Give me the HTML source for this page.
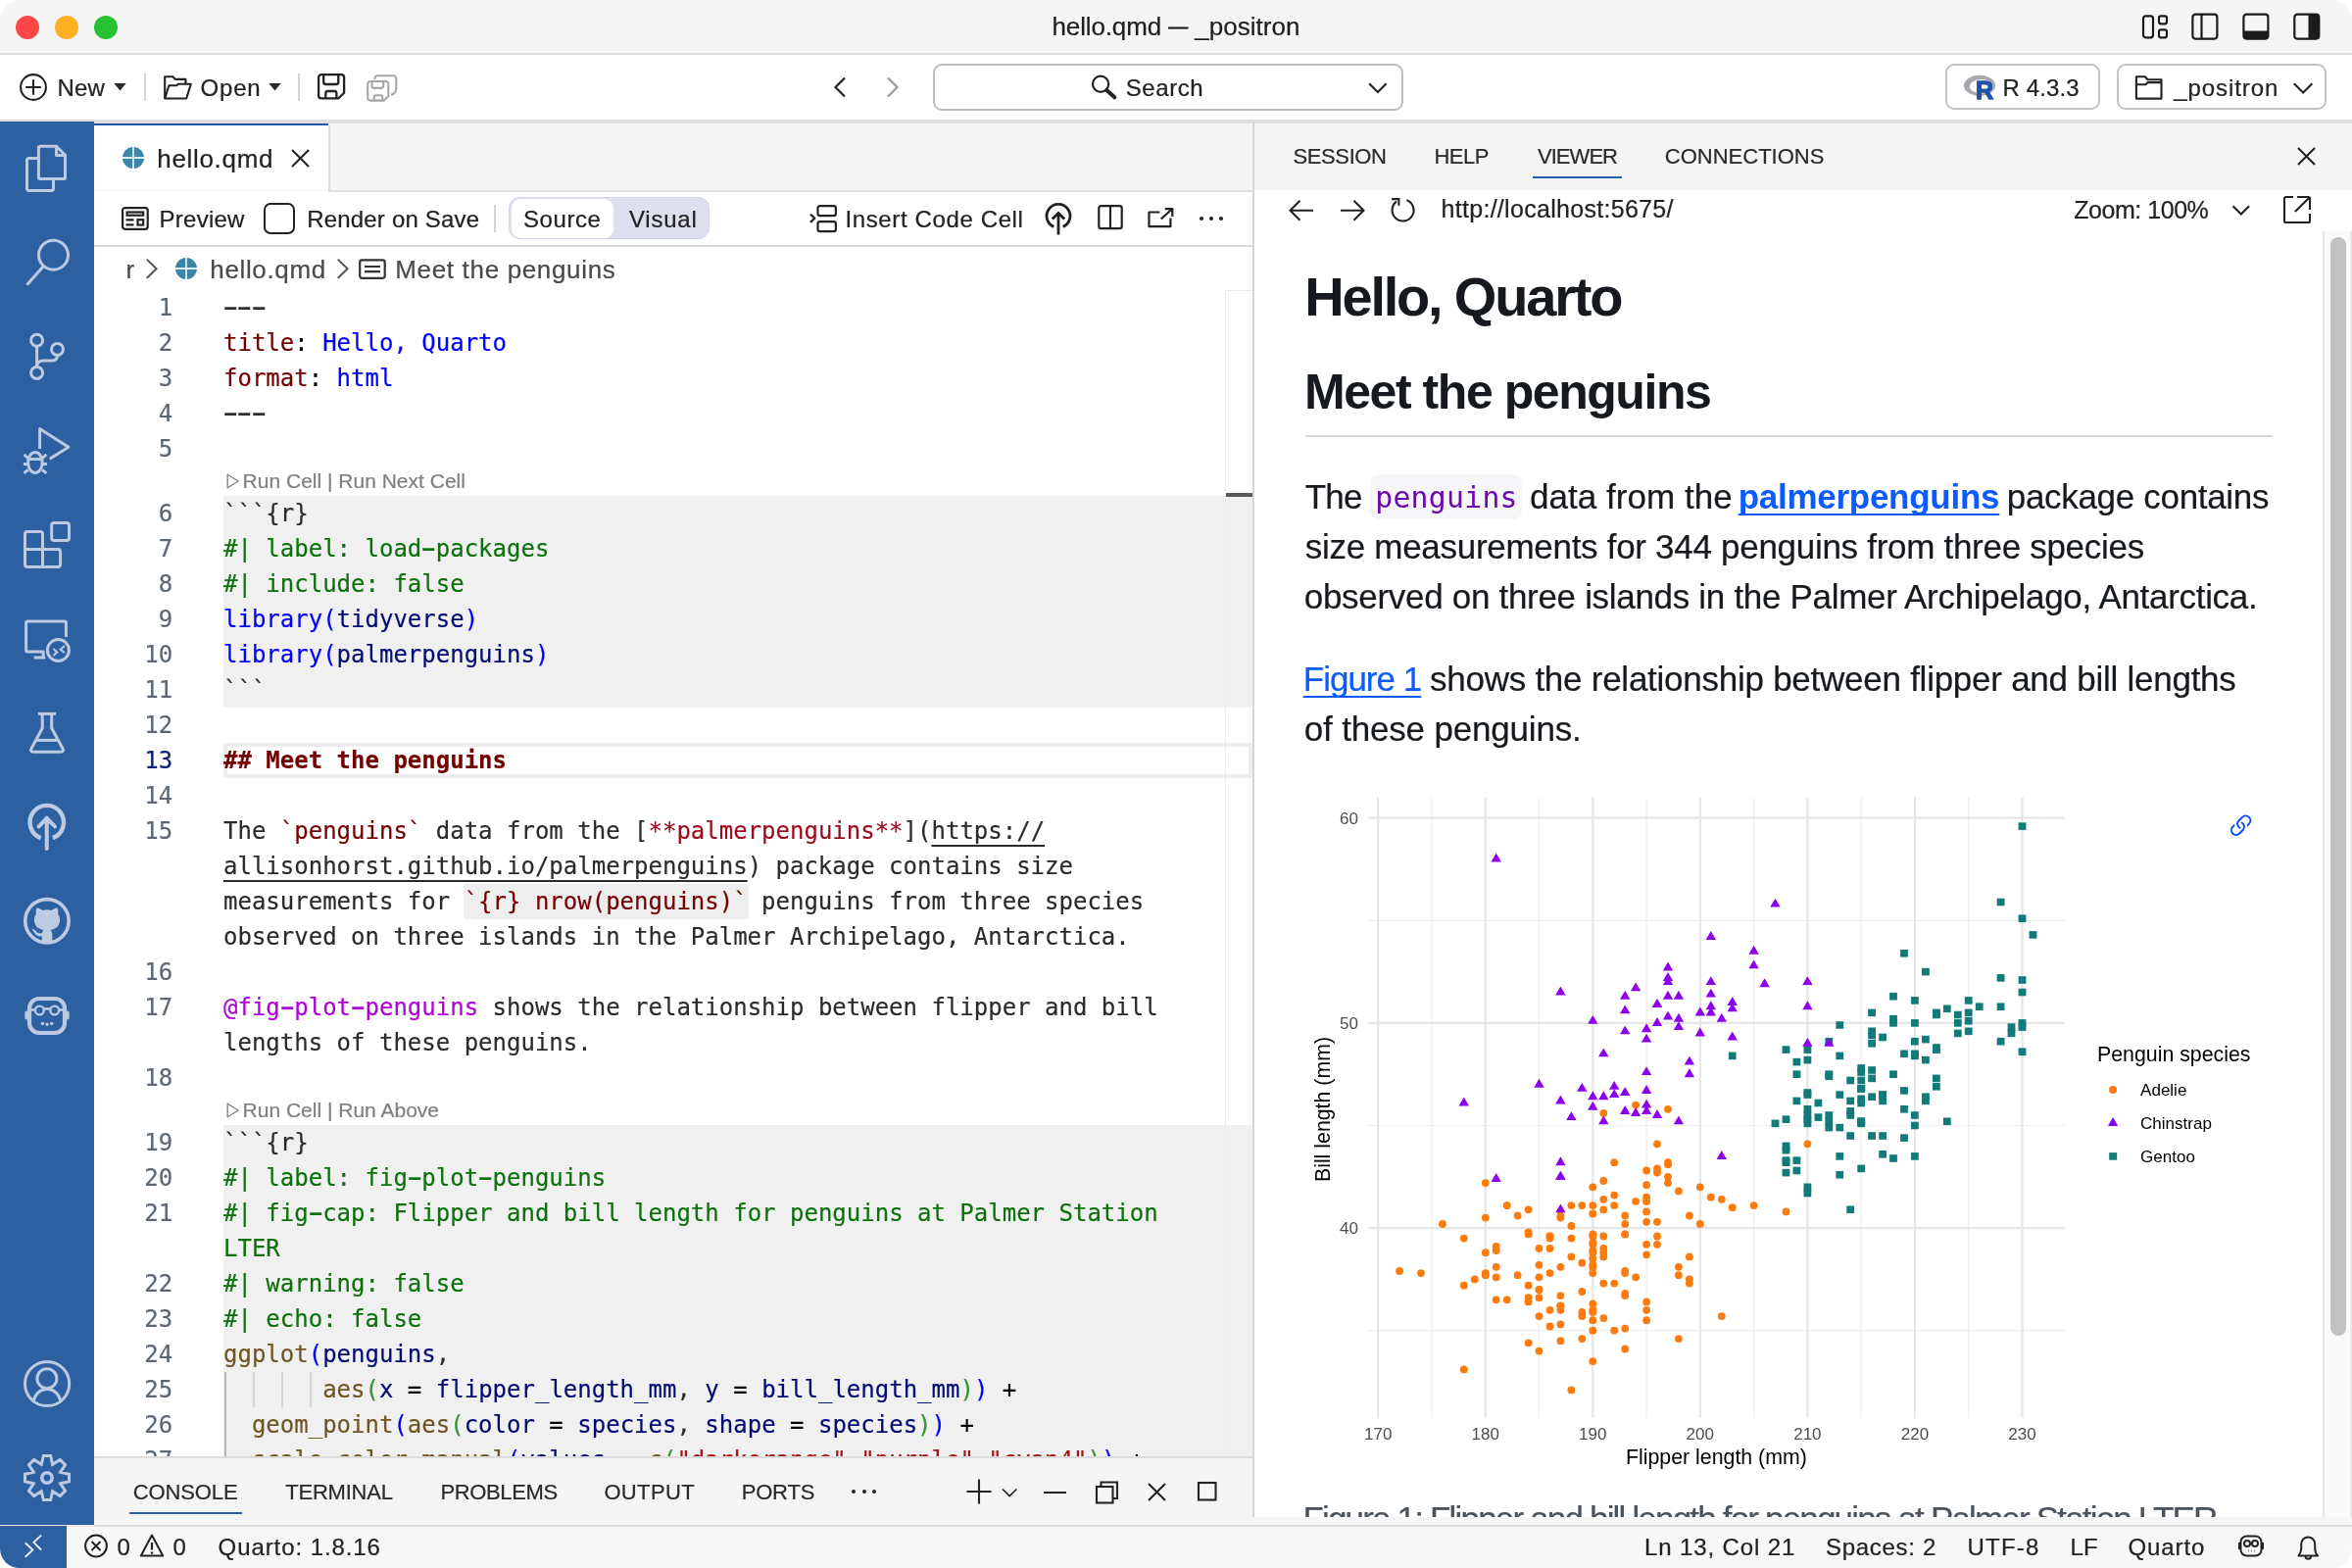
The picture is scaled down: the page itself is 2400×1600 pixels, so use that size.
<!DOCTYPE html>
<html lang="en"><head><meta charset="utf-8"><title>hello.qmd — _positron</title>
<style>
html,body{margin:0;padding:0;background:#fff;}
body{width:2400px;height:1600px;overflow:hidden;font-family:"Liberation Sans",Arial,sans-serif;}
#win{will-change:transform;position:absolute;left:0;top:0;width:2400px;height:1600px;overflow:hidden;border-radius:20px;background:#fff;}
.t{position:absolute;white-space:pre;line-height:1;margin:0;padding:0;}
.b{position:absolute;}
svg{position:absolute;overflow:visible;}
.hy{display:inline-block;transform:scale(1.900,1.300);transform-origin:50% 58%;}

</style></head>
<body>
<div id="win">
<div id="titlebar">
<div class="b" style="left:0px;top:0px;width:2400px;height:54px;background:#f5f5f5;"></div>
<div class="b" style="left:0px;top:54px;width:2400px;height:2px;background:#dcdcdc;"></div>
<div class="b" style="left:16px;top:16px;width:24px;height:24px;background:#fd4646;border-radius:50%;"></div>
<div class="b" style="left:56px;top:16px;width:24px;height:24px;background:#fdb024;border-radius:50%;"></div>
<div class="b" style="left:96px;top:16px;width:24px;height:24px;background:#28c131;border-radius:50%;"></div>
<span class="t" style="left:1073.500px;top:14.200px;font-size:26px;color:#1f1f1f;-webkit-text-stroke:0.220px;letter-spacing:-0.134px;">hello.qmd <span style="font-size:20px;position:relative;top:-2.300px;letter-spacing:0;-webkit-text-stroke:0.600px;">—</span> <span style="letter-spacing:0.024px;">_positron</span></span>
<svg style="left:2180px;top:8px;" width="200" height="40" viewBox="0 0 200 40" fill="none"><g stroke="#1a1a1a" stroke-width="2.2" fill="none"><rect x="7" y="8.3" width="10" height="22" rx="2.5"/><rect x="23" y="8.3" width="8" height="8" rx="2"/><rect x="23" y="22.3" width="8" height="8" rx="2"/><rect x="57.4" y="6.6" width="25" height="25" rx="3"/><line x1="66.5" y1="6.6" x2="66.5" y2="31.6"/><rect x="109.4" y="6.6" width="25" height="25" rx="3"/><rect x="161.3" y="6.6" width="25" height="25" rx="3"/></g><path d="M109.4 23.5h25v5.1a3 3 0 0 1-3 3h-19a3 3 0 0 1-3-3z" fill="#1a1a1a"/><path d="M175.5 6.6h7.8a3 3 0 0 1 3 3v19a3 3 0 0 1-3 3h-7.8z" fill="#1a1a1a"/></svg>
</div>
<div id="toolbar">
<div class="b" style="left:0px;top:56px;width:2400px;height:66px;background:#fff;"></div>
<div class="b" style="left:0px;top:122px;width:2400px;height:2px;background:#dedede;"></div>
<svg style="left:18px;top:73px;" width="32" height="32" viewBox="0 0 32 32" fill="none"><circle cx="16" cy="16" r="12.9" stroke="#222" stroke-width="2.1"/><path d="M8.2 16h15.6M16 8.2v15.6" stroke="#222" stroke-width="2.1"/></svg>
<span class="t" style='left:58.40px;top:77.80px;font-size:24px;color:#222;-webkit-text-stroke:0.220px;letter-spacing:0.208px;'>New</span>
<svg style="left:116px;top:84px;" width="14" height="10" viewBox="0 0 14 10" fill="none"><path d="M0.3 1h12.4L6.5 8.6z" fill="#2a2a2a"/></svg>
<div class="b" style="left:146.7px;top:75px;width:2px;height:28px;background:#d3d7dd;"></div>
<svg style="left:165px;top:75px;" width="34" height="28" viewBox="0 0 34 28" fill="none"><path d="M3.2 25.5V3.2h8.2l2.4 2.7h10.6v5.2" stroke="#222" stroke-width="2.1" stroke-linejoin="round" fill="none"/><path d="M3.2 25.5l4.2-13.2h7.6l2.2-1.6h12.6L25.2 25.5z" stroke="#222" stroke-width="2.1" stroke-linejoin="round" fill="none"/></svg>
<span class="t" style='left:204.60px;top:77.80px;font-size:24px;color:#222;-webkit-text-stroke:0.220px;letter-spacing:0.776px;'>Open</span>
<svg style="left:273.5px;top:84px;" width="14" height="10" viewBox="0 0 14 10" fill="none"><path d="M0.3 1h12.4L6.5 8.6z" fill="#2a2a2a"/></svg>
<div class="b" style="left:304.1px;top:75px;width:2px;height:28px;background:#d3d7dd;"></div>
<svg style="left:322px;top:73px;" width="32" height="32" viewBox="0 0 32 32" fill="none"><path d="M6 3.2h20.2a2.9 2.9 0 0 1 2.9 2.9v15.6l-5.6 5.6H6a2.9 2.9 0 0 1-2.9-2.9V6.100a2.9 2.9 0 0 1 2.900-2.900z" stroke="#222" stroke-width="2.3" stroke-linejoin="round"/><path d="M8.2 3.500v7.2a2.300 2.300 0 0 0 2.300 2.300h10.500a2.300 2.300 0 0 0 2.300-2.300V3.500" stroke="#222" stroke-width="2.3"/><path d="M10.300 27.200v-4.900a2.300 2.300 0 0 1 2.300-2.300h6.500a2.300 2.300 0 0 1 2.300 2.300v4.900" stroke="#222" stroke-width="2.300"/></svg>
<svg style="left:372px;top:74px;" width="36" height="32" viewBox="0 0 36 32" fill="none"><g stroke="#a6a6a6" stroke-width="2.1" fill="none" stroke-linejoin="round"><path d="M10.500 7.200V6a2.800 2.800 0 0 1 2.800-2.800h16.200a2.800 2.800 0 0 1 2.800 2.800v10.200c0 3.500-2.500 6-5.200 6.600"/><path d="M6 9h15.500a2.800 2.800 0 0 1 2.800 2.800v12.400l-4.400 4.400H6a2.800 2.800 0 0 1-2.800-2.800V11.800A2.800 2.800 0 0 1 6 9z"/><path d="M7.500 9.300v4.400a2.200 2.200 0 0 0 2.200 2.200h7.300a2.200 2.200 0 0 0 2.200-2.200V9.300"/><path d="M9.600 28.400v-3.100a2 2 0 0 1 2-2h4.700a2 2 0 0 1 2 2v3.100"/></g></svg>
<svg style="left:846px;top:75px;" width="24" height="28" viewBox="0 0 24 28" fill="none"><path d="M16 4.500L6.500 14l9.500 9.500" stroke="#222" stroke-width="2.2"/></svg>
<svg style="left:900px;top:75px;" width="24" height="28" viewBox="0 0 24 28" fill="none"><path d="M6 4.500L15.500 14 6 23.500" stroke="#9a9a9a" stroke-width="2.200"/></svg>
<div class="b" style="left:952px;top:65px;width:475.5px;height:43.5px;background:#fff;border:2px solid #bdbdbd;border-radius:9px;"></div>
<svg style="left:1110px;top:72px;" width="34" height="34" viewBox="0 0 34 34" fill="none"><circle cx="13.100" cy="13.700" r="8.100" stroke="#222" stroke-width="2.200"/><path d="M19.300 20l8 7.300" stroke="#222" stroke-width="4" stroke-linecap="round"/></svg>
<span class="t" style='left:1148.70px;top:77.80px;font-size:24px;color:#222;-webkit-text-stroke:0.220px;letter-spacing:0.580px;'>Search</span>
<svg style="left:1394px;top:80px;" width="24" height="20" viewBox="0 0 24 20" fill="none"><path d="M3.200 5.200l8.700 8.700 8.700-8.700" stroke="#222" stroke-width="2.100"/></svg>
<div class="b" style="left:1984.5px;top:65px;width:154px;height:43px;background:#fff;border:2px solid #c2c2c2;border-radius:9px;"></div>
<svg style="left:2003px;top:75px;" width="36" height="28" viewBox="0 0 36 28" fill="none"><ellipse cx="17" cy="12.300" rx="16.100" ry="10.500" fill="#a8a9ae"/><ellipse cx="18.900" cy="13.200" rx="11.900" ry="7.300" fill="#fff"/><text x="13" y="26.400" font-family="Liberation Sans, Arial, sans-serif" font-weight="700" font-size="25.300" fill="#2252a5" stroke="#2252a5" stroke-width="1.300" stroke-linejoin="round">R</text></svg>
<span class="t" style='left:2043.60px;top:77.70px;font-size:24px;color:#222;-webkit-text-stroke:0.220px;letter-spacing:0.110px;'>R 4.3.3</span>
<div class="b" style="left:2159.5px;top:65px;width:210px;height:43px;background:#fff;border:2px solid #c2c2c2;border-radius:9px;"></div>
<svg style="left:2176px;top:74px;" width="34" height="30" viewBox="0 0 34 30" fill="none"><path d="M3.900 26.600V4.200h8.900l2.700 3.100h14v19.300z" stroke="#222" stroke-width="2.100" stroke-linejoin="round"/><path d="M3.900 12.300h9.600l2.200-2.200h13.800" stroke="#222" stroke-width="2.100" stroke-linejoin="round"/></svg>
<span class="t" style='left:2218.30px;top:77.70px;font-size:24px;color:#222;-webkit-text-stroke:0.220px;letter-spacing:0.914px;'>_positron</span>
<svg style="left:2338px;top:80px;" width="24" height="20" viewBox="0 0 24 20" fill="none"><path d="M2.800 5.200l9.300 9.300 9.300-9.300" stroke="#222" stroke-width="2.100"/></svg>
</div>
<div id="activitybar">
<div class="b" style="left:0px;top:124px;width:96px;height:1432.5px;background:#2d60a1;"></div>
<svg style="left:0;top:0" width="96" height="1600" viewBox="0 0 96 1600" fill="none"><g stroke="#bccbe2" stroke-width="3" fill="none" stroke-linejoin="round" stroke-linecap="round"><path d="M41 149.300h16.500l9 9V181a1.600 1.600 0 0 1-1.600 1.600H41a1.600 1.600 0 0 1-1.600-1.600V150.900a1.600 1.600 0 0 1 1.600-1.600z"/><path d="M57.500 149.300v9.300h9"/><path d="M39.400 161.500H29.600a2.100 2.100 0 0 0-2.100 2.100v28.800a2.100 2.100 0 0 0 2.100 2.100h22.800a2.100 2.100 0 0 0 2.100-2.100v-9.800"/><circle cx="54.500" cy="260.200" r="15"/><path d="M44.300 271.800L27.500 290.700" stroke-linecap="butt"/><circle cx="37.600" cy="347.200" r="6"/><circle cx="58.500" cy="356.400" r="6"/><circle cx="37.600" cy="380.400" r="6"/><path d="M37.600 353.200v21.200"/><path d="M58.500 362.400c0 5.600-4 5.600-8 5.600h-6c-4 0-6.900 2-6.900 6"/><path d="M40.600 458V437.500l29.300 18.700-19.200 12" stroke-linecap="butt" stroke-linejoin="round"/><ellipse cx="35.900" cy="472" rx="7.300" ry="10.500"/><path d="M28.800 468.500h14.200" stroke-linecap="butt"/><path d="M23.900 473.400h4.500M43.400 473.400h4.500M24.500 463.900l4 3.400M47.300 463.900l-4 3.400M24.500 482.900l4.200-3.600M47.300 482.900l-4.200-3.600" stroke-linecap="butt"/><rect x="52.700" y="533.500" width="17.800" height="18" rx="2.500"/><path d="M43.500 560.400h15.600a2.500 2.500 0 0 1 2.500 2.500V576a2.500 2.500 0 0 1-2.500 2.500H28a2.500 2.500 0 0 1-2.500-2.500V545.100a2.500 2.500 0 0 1 2.500-2.500h13a2.500 2.500 0 0 1 2.500 2.500V578.500M25.500 560.400h18"/><path d="M67.400 650V635.400a1.500 1.500 0 0 0-1.500-1.500H28.100a1.500 1.500 0 0 0-1.500 1.500V663.500a1.500 1.500 0 0 0 1.500 1.500H44.100v5" stroke-linecap="butt"/><path d="M34.700 671h11.600" stroke-linecap="butt"/><circle cx="59.400" cy="663.500" r="11"/><path d="M54.500 662l3.700 3.500-3.700 3.600M65.800 658.900l-4 3.700 4 3.400" stroke-width="2.100" stroke-linecap="butt" stroke-linejoin="miter"/><path d="M38.900 728.400h18.200" stroke-linecap="butt"/><path d="M43.200 729.500V743L31.800 764.300a2 2 0 0 0 1.800 3h28.800a2 2 0 0 0 1.800-3L52.700 743V729.500"/><path d="M37.400 755.400h21.200" stroke-linecap="butt"/><path d="M41.600 855.100A17.200 17.200 0 1 1 53.900 855.100" stroke-width="4.400" stroke-linecap="butt"/><path d="M47.750 866V834.500M39.500 843.300l8.250-8.300 8.250 8.300" stroke-width="4"/><circle cx="47.950" cy="939.800" r="22.200" stroke-width="3.600"/><path stroke="none" fill="#bccbe2" d="M42.800 961.500v-6.300c-5.300 1.300-7-2.400-9.600-6.200-.5-.7-.3-1.300.6-1.100 3 .9 3.600 4.200 6.600 4.400 1 .1 1.900-.2 2.600-.6.200-1.200.7-2.100 1.400-2.800-5.200-.9-9.500-3.400-9.500-10.600 0-2.300.8-4.300 2.100-5.900-.4-1.300-.7-3.300.3-5.500.2-.4.600-.6 1-.5 1.900.3 3.800 1.400 5.200 2.500 3-.8 6-.8 9 0 1.400-1.100 3.300-2.200 5.200-2.500.4-.1.800.1 1 .5 1 2.200.7 4.200.3 5.500 1.300 1.600 2.100 3.600 2.100 5.900 0 7.200-4.300 9.700-9.500 10.600 1.100 1.100 1.700 2.800 1.700 4.900v7.700c-3.300 1.200-7.500 1.200-10.500 0z"/><rect x="30" y="1019" width="36" height="35" rx="10" stroke-width="4.200"/><path d="M27.300 1033.500v5M68.700 1033.500v5" stroke-width="4"/><circle cx="40.400" cy="1031" r="4.400" stroke-width="2.300"/><circle cx="55.700" cy="1031" r="4.400" stroke-width="2.300"/><path d="M44.800 1030c2-.9 4.500-.9 6.500 0M31 1030.500h5M60.100 1030.500h5" stroke-width="2.300"/><g fill="#bccbe2" stroke="none"><circle cx="43.500" cy="1044.500" r="1.700"/><circle cx="48.100" cy="1045.300" r="1.700"/><circle cx="52.700" cy="1044.500" r="1.700"/></g><circle cx="48.100" cy="1412" r="22.600"/><circle cx="47.900" cy="1406.700" r="10"/><path d="M34.200 1429.500c1.500-7.300 6.800-12 13.800-12s12.300 4.700 13.800 12"/><path d="M44.3 1485.5 L51.7 1485.5 L53.6 1494.3 L61.3 1489.5 L66.5 1494.7 L61.6 1502.3 L70.5 1504.3 L70.5 1511.7 L61.6 1513.7 L66.5 1521.3 L61.3 1526.5 L53.6 1521.7 L51.7 1530.5 L44.3 1530.5 L42.3 1521.7 L34.7 1526.5 L29.5 1521.3 L34.3 1513.7 L25.5 1511.7 L25.5 1504.3 L34.3 1502.3 L29.5 1494.7 L34.7 1489.5 L42.3 1494.3z" stroke-linejoin="miter"/><circle cx="47.970" cy="1508" r="5.200" stroke-width="3.500"/></g></svg>
</div>
<div id="statusbar">
<div class="b" style="left:1278px;top:1548px;width:1122px;height:8.5px;background:#f5f5f5;"></div>
<div class="b" style="left:0px;top:1556px;width:2400px;height:1.5px;background:#dddddd;"></div>
<div class="b" style="left:0px;top:1556px;width:96px;height:1.5px;background:#ece6e6;"></div>
<div class="b" style="left:0px;top:1557.5px;width:2400px;height:42.5px;background:#f7f7f7;"></div>
<div class="b" style="left:0px;top:1557px;width:68px;height:43px;background:#2d60a1;"></div>
<svg style="left:0px;top:1557px;" width="68" height="43" viewBox="0 0 68 43" fill="none"><path d="M25.700 17.300l7.700 7.200-7.700 7.300M42.100 9.600l-7.700 7.200 7.700 7.700" stroke="#e8eef7" stroke-width="1.900"/></svg>
<svg style="left:84px;top:1563.4px;" width="30" height="30" viewBox="0 0 30 30" fill="none"><circle cx="14" cy="14.500" r="10.900" stroke="#222" stroke-width="2"/><path d="M9.500 10l9 9M18.500 10l-9 9" stroke="#222" stroke-width="2"/></svg>
<span class="t" style='left:119.50px;top:1566.70px;font-size:24px;color:#222;-webkit-text-stroke:0.220px;'>0</span>
<svg style="left:141px;top:1563px;" width="30" height="30" viewBox="0 0 30 30" fill="none"><path d="M14 3.500L2.800 24.500h22.400z" stroke="#222" stroke-width="2" stroke-linejoin="round"/><path d="M14 11v7.500M14 20.500v2.300" stroke="#222" stroke-width="2.200"/></svg>
<span class="t" style='left:176.50px;top:1566.70px;font-size:24px;color:#222;-webkit-text-stroke:0.220px;'>0</span>
<span class="t" style='left:222.60px;top:1566.70px;font-size:24px;color:#222;-webkit-text-stroke:0.220px;letter-spacing:0.916px;'>Quarto: 1.8.16</span>
<span class="t" style='left:1678.00px;top:1566.70px;font-size:24px;color:#222;-webkit-text-stroke:0.220px;letter-spacing:0.881px;'>Ln 13, Col 21</span>
<span class="t" style='left:1863.00px;top:1566.70px;font-size:24px;color:#222;-webkit-text-stroke:0.220px;letter-spacing:0.702px;'>Spaces: 2</span>
<span class="t" style='left:2007.50px;top:1566.70px;font-size:24px;color:#222;-webkit-text-stroke:0.220px;letter-spacing:1.212px;'>UTF-8</span>
<span class="t" style='left:2112.50px;top:1566.70px;font-size:24px;color:#222;-webkit-text-stroke:0.220px;letter-spacing:0.145px;'>LF</span>
<span class="t" style='left:2171.50px;top:1566.70px;font-size:24px;color:#222;-webkit-text-stroke:0.220px;letter-spacing:0.895px;'>Quarto</span>
<svg style="left:2282px;top:1564px;" width="32" height="30" viewBox="0 0 32 30" fill="none"><g stroke="#222" stroke-width="2" fill="none"><rect x="4.500" y="3.500" width="21" height="20" rx="6"/><circle cx="11" cy="11" r="3"/><circle cx="19" cy="11" r="3"/><path d="M14 11h2M4.500 11H3v5h1.500M25.500 11H27v5h-1.500"/><path d="M12 18.500h.500M15 18.500h.500M18 18.500h.500" stroke-width="1.800"/></g></svg>
<svg style="left:2340px;top:1563px;" width="32" height="32" viewBox="0 0 32 32" fill="none"><path d="M5.500 24.500h19.500c-2.300-2.500-2.800-4-2.800-7.500v-4.500a7 7 0 0 0-14 0V17c0 3.500-.500 5-2.700 7.500z" stroke="#222" stroke-width="2" stroke-linejoin="round"/><path d="M12.500 25a2.800 2.800 0 0 0 5.600 0" stroke="#222" stroke-width="2"/></svg>
</div>
<div id="editor">
<div class="b" style="left:96px;top:124px;width:1182px;height:2px;background:#dedede;"></div>
<div class="b" style="left:96px;top:126px;width:1182px;height:68px;background:#f5f5f5;"></div>
<div class="b" style="left:96px;top:194px;width:1182px;height:2px;background:#dedede;"></div>
<div class="b" style="left:96px;top:126px;width:239px;height:70px;background:#fff;"></div>
<div class="b" style="left:96px;top:126px;width:239px;height:2px;background:#2259a5;"></div>
<div class="b" style="left:335px;top:128px;width:2px;height:68px;background:#dedede;"></div>
<div class="b" style="left:96px;top:194px;width:239px;height:1px;background:#f3f3f3;"></div>
<svg style="left:125.1px;top:150px;" width="22" height="22" viewBox="0 0 22 22" fill="none"><circle cx="11" cy="11" r="11" fill="#3b86a6"/><path d="M11 0v22M0 11h22" stroke="#dfeef4" stroke-width="1.800"/></svg>
<span class="t" style='left:160.30px;top:148.70px;font-size:26px;color:#222;-webkit-text-stroke:0.220px;letter-spacing:0.678px;'>hello.qmd</span>
<svg style="left:296px;top:150.5px;" width="21" height="21" viewBox="0 0 21 21" fill="none"><path d="M2 2l17 17M19 2L2 19" stroke="#222" stroke-width="2.100"/></svg>
<div class="b" style="left:96px;top:196px;width:1182px;height:54px;background:#fff;"></div>
<div class="b" style="left:96px;top:250px;width:1182px;height:2px;background:#dcdcdc;"></div>
<svg style="left:122px;top:209px;" width="32" height="28" viewBox="0 0 32 28" fill="none"><g stroke="#222" stroke-width="2.200" fill="none"><rect x="3.100" y="3.100" width="25.600" height="21.700" rx="2.500"/><rect x="7.600" y="7.500" width="16.600" height="3.200"/><rect x="18.500" y="15.200" width="5.700" height="5.300"/><path d="M6.500 15.400h8M6.500 20.300h8"/></g></svg>
<span class="t" style='left:162.60px;top:211.50px;font-size:24px;color:#222;-webkit-text-stroke:0.220px;letter-spacing:0.245px;'>Preview</span>
<div class="b" style="left:269px;top:207px;width:28px;height:28px;background:#fff;border:2px solid #222;border-radius:7px;"></div>
<span class="t" style='left:313.20px;top:211.50px;font-size:24px;color:#222;-webkit-text-stroke:0.220px;letter-spacing:0.192px;'>Render on Save</span>
<div class="b" style="left:503.5px;top:209px;width:2px;height:28px;background:#d3d7dd;"></div>
<div class="b" style="left:519px;top:201px;width:203px;height:41px;background:#dddfee;border:1.500px solid #d3d5ea;border-radius:11px;"></div>
<div class="b" style="left:521.7px;top:203px;width:104.2px;height:40px;background:#fff;border-radius:9.500px;"></div>
<span class="t" style='left:534.00px;top:211.50px;font-size:24px;color:#222;-webkit-text-stroke:0.220px;letter-spacing:0.560px;'>Source</span>
<span class="t" style='left:642.00px;top:211.50px;font-size:24px;color:#222;-webkit-text-stroke:0.220px;letter-spacing:0.779px;'>Visual</span>
<svg style="left:823.5px;top:207px;" width="34" height="32" viewBox="0 0 34 32" fill="none"><g stroke="#222" stroke-width="2.200" fill="none"><rect x="10.500" y="3.200" width="18.400" height="10" rx="2.200"/><rect x="10.500" y="19.200" width="18.400" height="10" rx="2.200"/><path d="M3 11.500l4.200 4.200L3 19.900"/></g></svg>
<span class="t" style='left:862.40px;top:211.50px;font-size:24px;color:#222;-webkit-text-stroke:0.220px;letter-spacing:0.630px;'>Insert Code Cell</span>
<svg style="left:1064px;top:204px;" width="32" height="36" viewBox="0 0 32 36" fill="none"><g stroke="#222" stroke-width="2.800" fill="none"><path d="M11.300 27.400A12 12 0 1 1 20.700 27.400"/><path d="M16 35.500V14"/><path d="M9.800 19.600L16 13.400l6.200 6.200"/></g></svg>
<svg style="left:1118px;top:207px;" width="30" height="30" viewBox="0 0 30 30" fill="none"><g stroke="#222" stroke-width="2.200" fill="none"><rect x="3.300" y="3.200" width="23.400" height="23" rx="2.200"/><path d="M15 3.200v23"/></g></svg>
<svg style="left:1169px;top:208px;" width="30" height="28" viewBox="0 0 30 28" fill="none"><g stroke="#222" stroke-width="2.200" fill="none" stroke-linejoin="round"><path d="M14.400 8.500H3.500V23.200H25.400V14.500"/><path d="M15.700 15.500L27 5.200M19.800 5.100h7.500v7.900"/></g></svg>
<div class="b" style="left:1223.8px;top:220.9px;width:3.8px;height:3.8px;background:#222;border-radius:50%;"></div>
<div class="b" style="left:1234.1px;top:220.9px;width:3.8px;height:3.8px;background:#222;border-radius:50%;"></div>
<div class="b" style="left:1244.3999999999999px;top:220.9px;width:3.8px;height:3.8px;background:#222;border-radius:50%;"></div>
<div class="b" style="left:96px;top:252px;width:1182px;height:43px;background:#fff;"></div>
<span class="t" style='left:128.40px;top:261.60px;font-size:26px;color:#4a4a4a;-webkit-text-stroke:0.220px;'>r</span>
<svg style="left:146px;top:262px;" width="18" height="24" viewBox="0 0 18 24" fill="none"><path d="M3.800 2.600l9.800 9.600-9.800 9.600" stroke="#555" stroke-width="2"/></svg>
<svg style="left:179px;top:263px;" width="22" height="22" viewBox="0 0 22 22" fill="none"><circle cx="11" cy="11" r="11" fill="#3b86a6"/><path d="M11 0v22M0 11h22" stroke="#dfeef4" stroke-width="1.800"/></svg>
<span class="t" style='left:214.30px;top:261.60px;font-size:26px;color:#4a4a4a;-webkit-text-stroke:0.220px;letter-spacing:0.641px;'>hello.qmd</span>
<svg style="left:341px;top:262px;" width="18" height="24" viewBox="0 0 18 24" fill="none"><path d="M3.800 2.600l9.800 9.600-9.800 9.600" stroke="#555" stroke-width="2"/></svg>
<svg style="left:364px;top:263px;" width="32" height="24" viewBox="0 0 32 24" fill="none"><g stroke="#333" stroke-width="2.200" fill="none"><rect x="3.200" y="2.300" width="25.500" height="18.500" rx="2.200"/><path d="M8 9h16M8 14.200h16"/></g></svg>
<span class="t" style='left:403.30px;top:261.60px;font-size:26px;color:#4a4a4a;-webkit-text-stroke:0.220px;letter-spacing:0.660px;'>Meet the penguins</span>
<div class="b" style="left:96px;top:295px;width:1182px;height:1191px;background:#fff;overflow:hidden;"></div>
<div class="b" style="left:228px;top:505.59999999999997px;width:1050px;height:216.00000000000006px;background:#f0f0f0;"></div>
<div class="b" style="left:228px;top:1147.9px;width:1050px;height:338.0999999999999px;background:#f0f0f0;"></div>
<div class="b" style="left:228px;top:757.9px;width:1042px;height:28px;background:transparent;border:4px solid #ededed;"></div>
<div class="b" style="left:472.65px;top:901.6px;width:291.0px;height:36px;background:#eeeeee;"></div>
<div class="b" style="left:1250px;top:296px;width:1px;height:1190px;background:#ebebeb;"></div>
<div class="b" style="left:1250px;top:296px;width:28px;height:1px;background:#ebebeb;"></div>
<div class="b" style="left:1251px;top:503px;width:27px;height:4px;background:#5a5a5a;"></div>
<div class="b" style="left:229px;top:1399.9px;width:1.5px;height:108px;background:#b8b8b8;"></div>
<div class="b" style="left:258px;top:1399.9px;width:1.5px;height:36px;background:#d6d6d6;"></div>
<div class="b" style="left:287px;top:1399.9px;width:1.5px;height:36px;background:#d6d6d6;"></div>
<div class="b" style="left:316px;top:1399.9px;width:1.5px;height:36px;background:#d6d6d6;"></div>
<div id='code' style='position:absolute;left:0;top:0;font-family:"DejaVu Sans Mono", "Liberation Mono", monospace;font-size:24px;-webkit-text-stroke:0.180px;'>
<span class="t" style="left:161.75px;top:301.60px;color:#5c6773;">1</span>
<span class="t" style="left:228px;top:301.60px;"><span style="color:#2a2a2a;"><span class="hy">-</span><span class="hy">-</span><span class="hy">-</span></span></span>
<span class="t" style="left:161.75px;top:337.60px;color:#5c6773;">2</span>
<span class="t" style="left:228px;top:337.60px;"><span style="color:#740000;">title</span><span style="color:#000;">: </span><span style="color:#0000ff;">Hello, Quarto</span></span>
<span class="t" style="left:161.75px;top:373.60px;color:#5c6773;">3</span>
<span class="t" style="left:228px;top:373.60px;"><span style="color:#740000;">format</span><span style="color:#000;">: </span><span style="color:#0000ff;">html</span></span>
<span class="t" style="left:161.75px;top:409.60px;color:#5c6773;">4</span>
<span class="t" style="left:228px;top:409.60px;"><span style="color:#2a2a2a;"><span class="hy">-</span><span class="hy">-</span><span class="hy">-</span></span></span>
<span class="t" style="left:161.75px;top:445.60px;color:#5c6773;">5</span>
<span class="t" style="left:161.75px;top:511.90px;color:#5c6773;">6</span>
<span class="t" style="left:228px;top:511.90px;"><span style="color:#2a2a2a;">```{r}</span></span>
<span class="t" style="left:161.75px;top:547.90px;color:#5c6773;">7</span>
<span class="t" style="left:228px;top:547.90px;"><span style="color:#0b720b;">#| label: load<span class="hy">-</span>packages</span></span>
<span class="t" style="left:161.75px;top:583.90px;color:#5c6773;">8</span>
<span class="t" style="left:228px;top:583.90px;"><span style="color:#0b720b;">#| include: false</span></span>
<span class="t" style="left:161.75px;top:619.90px;color:#5c6773;">9</span>
<span class="t" style="left:228px;top:619.90px;"><span style="color:#0000ff;">library(</span><span style="color:#000c74;">tidyverse</span><span style="color:#0000ff;">)</span></span>
<span class="t" style="left:147.30px;top:655.90px;color:#5c6773;">10</span>
<span class="t" style="left:228px;top:655.90px;"><span style="color:#0000ff;">library(</span><span style="color:#000c74;">palmerpenguins</span><span style="color:#0000ff;">)</span></span>
<span class="t" style="left:147.30px;top:691.90px;color:#5c6773;">11</span>
<span class="t" style="left:228px;top:691.90px;"><span style="color:#2a2a2a;">```</span></span>
<span class="t" style="left:147.30px;top:727.90px;color:#5c6773;">12</span>
<span class="t" style="left:147.30px;top:763.90px;color:#0b216f;">13</span>
<span class="t" style="left:228px;top:763.90px;"><span style="color:#740000;font-weight:700;">## Meet the penguins</span></span>
<span class="t" style="left:147.30px;top:799.90px;color:#5c6773;">14</span>
<span class="t" style="left:147.30px;top:835.90px;color:#5c6773;">15</span>
<span class="t" style="left:228px;top:835.90px;"><span style="color:#2a2a2a;">The </span><span style="color:#740000;">`penguins`</span><span style="color:#2a2a2a;"> data from the [</span><span style="color:#9c0b1c;">**palmerpenguins**</span><span style="color:#2a2a2a;">](</span><span style="color:#2a2a2a;text-decoration:underline;text-decoration-thickness:1.800px;text-underline-offset:6px;text-decoration-skip-ink:none;">https://</span></span>
<span class="t" style="left:228px;top:871.90px;"><span style="color:#2a2a2a;text-decoration:underline;text-decoration-thickness:1.800px;text-underline-offset:6px;text-decoration-skip-ink:none;">allisonhorst.github.io/palmerpenguins</span><span style="color:#2a2a2a;">) package contains size</span></span>
<span class="t" style="left:228px;top:907.90px;"><span style="color:#2a2a2a;">measurements for </span><span style="color:#740000;">`{r} nrow(penguins)`</span><span style="color:#2a2a2a;"> penguins from three species</span></span>
<span class="t" style="left:228px;top:943.90px;"><span style="color:#2a2a2a;">observed on three islands in the Palmer Archipelago, Antarctica.</span></span>
<span class="t" style="left:147.30px;top:979.90px;color:#5c6773;">16</span>
<span class="t" style="left:147.30px;top:1015.90px;color:#5c6773;">17</span>
<span class="t" style="left:228px;top:1015.90px;"><span style="color:#af00db;">@fig<span class="hy">-</span>plot<span class="hy">-</span>penguins</span><span style="color:#2a2a2a;"> shows the relationship between flipper and bill</span></span>
<span class="t" style="left:228px;top:1051.90px;"><span style="color:#2a2a2a;">lengths of these penguins.</span></span>
<span class="t" style="left:147.30px;top:1087.90px;color:#5c6773;">18</span>
<span class="t" style="left:147.30px;top:1154.20px;color:#5c6773;">19</span>
<span class="t" style="left:228px;top:1154.20px;"><span style="color:#2a2a2a;">```{r}</span></span>
<span class="t" style="left:147.30px;top:1190.20px;color:#5c6773;">20</span>
<span class="t" style="left:228px;top:1190.20px;"><span style="color:#0b720b;">#| label: fig<span class="hy">-</span>plot<span class="hy">-</span>penguins</span></span>
<span class="t" style="left:147.30px;top:1226.20px;color:#5c6773;">21</span>
<span class="t" style="left:228px;top:1226.20px;"><span style="color:#0b720b;">#| fig<span class="hy">-</span>cap: Flipper and bill length for penguins at Palmer Station</span></span>
<span class="t" style="left:228px;top:1262.20px;"><span style="color:#0b720b;">LTER</span></span>
<span class="t" style="left:147.30px;top:1298.20px;color:#5c6773;">22</span>
<span class="t" style="left:228px;top:1298.20px;"><span style="color:#0b720b;">#| warning: false</span></span>
<span class="t" style="left:147.30px;top:1334.20px;color:#5c6773;">23</span>
<span class="t" style="left:228px;top:1334.20px;"><span style="color:#0b720b;">#| echo: false</span></span>
<span class="t" style="left:147.30px;top:1370.20px;color:#5c6773;">24</span>
<span class="t" style="left:228px;top:1370.20px;"><span style="color:#6f5523;">ggplot</span><span style="color:#0000ff;">(</span><span style="color:#000c74;">penguins</span><span style="color:#2a2a2a;">,</span></span>
<span class="t" style="left:147.30px;top:1406.20px;color:#5c6773;">25</span>
<span class="t" style="left:228px;top:1406.20px;"><span style="color:#2a2a2a;">       </span><span style="color:#6f5523;">aes</span><span style="color:#319331;">(</span><span style="color:#000c74;">x</span><span style="color:#000;"> = </span><span style="color:#000c74;">flipper_length_mm</span><span style="color:#2a2a2a;">, </span><span style="color:#000c74;">y</span><span style="color:#000;"> = </span><span style="color:#000c74;">bill_length_mm</span><span style="color:#319331;">)</span><span style="color:#0000ff;">)</span><span style="color:#000;"> +</span></span>
<span class="t" style="left:147.30px;top:1442.20px;color:#5c6773;">26</span>
<span class="t" style="left:228px;top:1442.20px;"><span style="color:#2a2a2a;">  </span><span style="color:#6f5523;">geom_point</span><span style="color:#0000ff;">(</span><span style="color:#6f5523;">aes</span><span style="color:#319331;">(</span><span style="color:#000c74;">color</span><span style="color:#000;"> = </span><span style="color:#000c74;">species</span><span style="color:#2a2a2a;">, </span><span style="color:#000c74;">shape</span><span style="color:#000;"> = </span><span style="color:#000c74;">species</span><span style="color:#319331;">)</span><span style="color:#0000ff;">)</span><span style="color:#000;"> +</span></span>
<span class="t" style="left:147.30px;top:1478.20px;color:#5c6773;">27</span>
<span class="t" style="left:228px;top:1478.20px;"><span style="color:#2a2a2a;">  </span><span style="color:#6f5523;">scale_color_manual</span><span style="color:#0000ff;">(</span><span style="color:#000c74;">values</span><span style="color:#000;"> = </span><span style="color:#6f5523;">c</span><span style="color:#319331;">(</span><span style="color:#a31515;">&quot;darkorange&quot;</span><span style="color:#2a2a2a;">,</span><span style="color:#a31515;">&quot;purple&quot;</span><span style="color:#2a2a2a;">,</span><span style="color:#a31515;">&quot;cyan4&quot;</span><span style="color:#319331;">)</span><span style="color:#0000ff;">)</span><span style="color:#000;"> +</span></span>
</div>
<svg style="left:230px;top:481.6px;" width="16" height="18" viewBox="0 0 16 18" fill="none"><path d="M2.200 2.300v13.400l11-6.700z" stroke="#808080" stroke-width="1.300" stroke-linejoin="round"/></svg>
<span class="t" style='left:247.60px;top:480.10px;font-size:21px;color:#808080;-webkit-text-stroke:0.220px;letter-spacing:0.006px;'>Run Cell | Run Next Cell</span>
<svg style="left:230px;top:1123.9px;" width="16" height="18" viewBox="0 0 16 18" fill="none"><path d="M2.200 2.300v13.400l11-6.700z" stroke="#808080" stroke-width="1.300" stroke-linejoin="round"/></svg>
<span class="t" style='left:247.60px;top:1122.40px;font-size:21px;color:#808080;-webkit-text-stroke:0.220px;'>Run Cell | Run Above</span>
<div class="b" style="left:96px;top:1486px;width:1182px;height:1.5px;background:#dcdcdc;"></div>
<div class="b" style="left:96px;top:1487.5px;width:1182px;height:68.5px;background:#f5f5f5;"></div>
<span class="t" style='left:135.80px;top:1511.80px;font-size:22px;color:#2a2a2a;-webkit-text-stroke:0.220px;letter-spacing:-0.137px;'>CONSOLE</span>
<span class="t" style='left:291.20px;top:1511.80px;font-size:22px;color:#2a2a2a;-webkit-text-stroke:0.220px;letter-spacing:-0.202px;'>TERMINAL</span>
<span class="t" style='left:449.60px;top:1511.80px;font-size:22px;color:#2a2a2a;-webkit-text-stroke:0.220px;letter-spacing:-0.399px;'>PROBLEMS</span>
<span class="t" style='left:616.40px;top:1511.80px;font-size:22px;color:#2a2a2a;-webkit-text-stroke:0.220px;letter-spacing:0.357px;'>OUTPUT</span>
<span class="t" style='left:756.70px;top:1511.80px;font-size:22px;color:#2a2a2a;-webkit-text-stroke:0.220px;letter-spacing:-0.179px;'>PORTS</span>
<div class="b" style="left:132.2px;top:1543px;width:114.8px;height:2px;background:#2a5fa5;"></div>
<div class="b" style="left:869.3px;top:1519.9px;width:4.2px;height:4.2px;background:#222;border-radius:50%;"></div>
<div class="b" style="left:879.5px;top:1519.9px;width:4.2px;height:4.2px;background:#222;border-radius:50%;"></div>
<div class="b" style="left:889.6999999999999px;top:1519.9px;width:4.2px;height:4.2px;background:#222;border-radius:50%;"></div>
<svg style="left:984px;top:1507px;" width="30" height="30" viewBox="0 0 30 30" fill="none"><path d="M15 2.500v25M2.500 15h25" stroke="#222" stroke-width="2.100"/></svg>
<svg style="left:1020px;top:1515px;" width="20" height="16" viewBox="0 0 20 16" fill="none"><path d="M3 4.500l7.200 7 7.200-7" stroke="#222" stroke-width="1.700"/></svg>
<div class="b" style="left:1065px;top:1521.8px;width:23px;height:2.1px;background:#222;"></div>
<svg style="left:1116px;top:1509px;" width="28" height="28" viewBox="0 0 28 28" fill="none"><g stroke="#222" stroke-width="2.100" fill="none"><rect x="3" y="8" width="16.500" height="16.500"/><path d="M7.500 8V3.500h16.500V20h-4.500"/></g></svg>
<svg style="left:1170px;top:1512px;" width="21" height="21" viewBox="0 0 21 21" fill="none"><path d="M2 2l17 17M19 2L2 19" stroke="#222" stroke-width="2.100"/></svg>
<svg style="left:1220px;top:1510px;" width="24" height="24" viewBox="0 0 24 24" fill="none"><rect x="3" y="3" width="17.500" height="17.500" stroke="#222" stroke-width="2.100"/></svg>
</div>
<div id="viewer">
<div class="b" style="left:1278px;top:124px;width:2px;height:1424px;background:#d6d6d6;"></div>
<div class="b" style="left:1280px;top:124px;width:1120px;height:2px;background:#dedede;"></div>
<div class="b" style="left:1280px;top:126px;width:1120px;height:68px;background:#f5f5f5;"></div>
<span class="t" style='left:1319.50px;top:149.20px;font-size:22px;color:#2a2a2a;-webkit-text-stroke:0.220px;letter-spacing:-0.387px;'>SESSION</span>
<span class="t" style='left:1463.40px;top:149.20px;font-size:22px;color:#2a2a2a;-webkit-text-stroke:0.220px;letter-spacing:-0.504px;'>HELP</span>
<span class="t" style='left:1569.00px;top:149.20px;font-size:22px;color:#2a2a2a;-webkit-text-stroke:0.220px;letter-spacing:-0.962px;'>VIEWER</span>
<span class="t" style='left:1698.80px;top:149.20px;font-size:22px;color:#2a2a2a;-webkit-text-stroke:0.220px;'>CONNECTIONS</span>
<div class="b" style="left:1564.1px;top:180px;width:90.6px;height:2px;background:#2a5fa5;"></div>
<svg style="left:2343px;top:148.5px;" width="21" height="21" viewBox="0 0 21 21" fill="none"><path d="M2 2l17 17M19 2L2 19" stroke="#222" stroke-width="2.100"/></svg>
<div class="b" style="left:1280px;top:194px;width:1120px;height:1354px;background:#fff;"></div>
<svg style="left:1312px;top:200px;" width="32" height="30" viewBox="0 0 32 30" fill="none"><path d="M28 14.800H4.500M14.500 4.800l-10 10 10 10" stroke="#222" stroke-width="2.100"/></svg>
<svg style="left:1364px;top:200px;" width="32" height="30" viewBox="0 0 32 30" fill="none"><path d="M4 14.800h23.500M17.500 4.800l10 10-10 10" stroke="#222" stroke-width="2.100"/></svg>
<svg style="left:1416px;top:198px;" width="32" height="32" viewBox="0 0 32 32" fill="none"><path d="M19.400 6.200A11 11 0 1 1 9 7.700" stroke="#222" stroke-width="2.100"/><path d="M4.100 5.100h7.300v6.600" stroke="#222" stroke-width="2.100"/></svg>
<span class="t" style='left:1470.50px;top:201.00px;font-size:25px;color:#222;-webkit-text-stroke:0.220px;letter-spacing:0.297px;'>http://localhost:5675/</span>
<span class="t" style='left:2116.30px;top:201.50px;font-size:25px;color:#222;-webkit-text-stroke:0.220px;letter-spacing:-0.469px;'>Zoom: 100%</span>
<svg style="left:2276px;top:205px;" width="22" height="20" viewBox="0 0 22 20" fill="none"><path d="M2.500 5.200l8.300 8.300 8.300-8.300" stroke="#222" stroke-width="2.100"/></svg>
<svg style="left:2327px;top:197px;" width="34" height="34" viewBox="0 0 34 34" fill="none"><g stroke="#222" stroke-width="2.100" fill="none"><path d="M13 4H5.500a1.500 1.500 0 0 0-1.500 1.500V28.500a1.500 1.500 0 0 0 1.500 1.500H28.500a1.500 1.500 0 0 0 1.500-1.500V21"/><path d="M17.100 4H28.500a1.500 1.500 0 0 1 1.500 1.500V16.900"/><path d="M14.900 19.100L29.300 4.700"/></g></svg>
<div class="b" style="left:2370px;top:236px;width:26px;height:1312px;background:#fafafa;border-left:2px solid #e2e2e2;border-right:2px solid #e8e8e8;"></div>
<div class="b" style="left:2378px;top:242px;width:16px;height:1121px;background:#c1c1c1;border-radius:8px;"></div>
<h1 class="t" style='left:1331.20px;top:274.50px;font-size:56px;color:#16191d;font-weight:700;letter-spacing:-2.199px;'>Hello, Quarto</h1>
<h2 class="t" style='left:1331.00px;top:374.70px;font-size:50px;color:#16191d;font-weight:700;letter-spacing:-1.445px;'>Meet the penguins</h2>
<div class="b" style="left:1332px;top:444px;width:987px;height:2px;background:#d9dadc;"></div>
<div class="b" style="left:1398.2px;top:484.3px;width:154.4px;height:46px;background:#f6f6f8;border-radius:9px;"></div>
<p style="margin:0"><span class="t" style='left:1331.80px;top:488.50px;font-size:35px;color:#16191d;-webkit-text-stroke:0.220px;letter-spacing:-0.874px;'>The</span> <code class="t" style='left:1403.20px;top:493.00px;font-size:29.75px;color:#6b0aa8;font-family:"DejaVu Sans Mono", "Liberation Mono", monospace;letter-spacing:0.288px;'>penguins</code> <span class="t" style='left:1560.90px;top:488.50px;font-size:35px;color:#16191d;-webkit-text-stroke:0.220px;letter-spacing:0.053px;'>data from the</span> <a class="t" style='left:1773.70px;top:488.50px;font-size:35px;color:#0d5bfd;font-weight:700;letter-spacing:-0.274px;text-decoration:underline;text-decoration-thickness:2.200px;text-underline-offset:5px;text-decoration-skip-ink:none;'>palmerpenguins</a> <span class="t" style='left:2047.80px;top:488.50px;font-size:35px;color:#16191d;-webkit-text-stroke:0.220px;letter-spacing:-0.315px;'>package contains</span> <span class="t" style='left:1331.80px;top:539.50px;font-size:35px;color:#16191d;-webkit-text-stroke:0.220px;letter-spacing:-0.292px;'>size measurements for 344 penguins from three species</span> <span class="t" style='left:1330.80px;top:590.50px;font-size:35px;color:#16191d;-webkit-text-stroke:0.220px;letter-spacing:-0.307px;'>observed on three islands in the Palmer Archipelago, Antarctica.</span></p>
<p style="margin:0"><a class="t" style='left:1329.80px;top:674.60px;font-size:35px;color:#0d5bfd;-webkit-text-stroke:0.220px;letter-spacing:-1.006px;text-decoration:underline;text-decoration-thickness:2.200px;text-underline-offset:5px;text-decoration-skip-ink:none;'>Figure 1</a> <span class="t" style='left:1459.00px;top:674.60px;font-size:35px;color:#16191d;-webkit-text-stroke:0.220px;letter-spacing:-0.256px;'>shows the relationship between flipper and bill lengths</span> <span class="t" style='left:1330.80px;top:725.60px;font-size:35px;color:#16191d;-webkit-text-stroke:0.220px;letter-spacing:-0.185px;'>of these penguins.</span></p>
<div class="b" style="left:1300px;top:1500px;width:1070px;height:48px;overflow:hidden;">
<span class="t" style='left:29.40px;top:32.30px;font-size:35px;color:#4a525c;-webkit-text-stroke:0.220px;letter-spacing:-1.821px;'>Figure 1: Flipper and bill length for penguins at Palmer Station LTER</span>
</div>
</div>
<svg id="plot" style="left:0;top:0;" width="2400" height="1600" viewBox="0 0 2400 1600"><line x1="1461.0" x2="1461.0" y1="813.7" y2="1446.7" stroke="#eeeeee" stroke-width="1.200"/><line x1="1570.5" x2="1570.5" y1="813.7" y2="1446.7" stroke="#eeeeee" stroke-width="1.200"/><line x1="1680.1" x2="1680.1" y1="813.7" y2="1446.7" stroke="#eeeeee" stroke-width="1.200"/><line x1="1789.6" x2="1789.6" y1="813.7" y2="1446.7" stroke="#eeeeee" stroke-width="1.200"/><line x1="1899.2" x2="1899.2" y1="813.7" y2="1446.7" stroke="#eeeeee" stroke-width="1.200"/><line x1="2008.7" x2="2008.7" y1="813.7" y2="1446.7" stroke="#eeeeee" stroke-width="1.200"/><line x1="1396" x2="2107" y1="1357.7" y2="1357.7" stroke="#eeeeee" stroke-width="1.200"/><line x1="1396" x2="2107" y1="1148.5" y2="1148.5" stroke="#eeeeee" stroke-width="1.200"/><line x1="1396" x2="2107" y1="939.3" y2="939.3" stroke="#eeeeee" stroke-width="1.200"/><line x1="1406.2" x2="1406.2" y1="813.7" y2="1446.7" stroke="#e6e6e6" stroke-width="2.200"/><line x1="1515.8" x2="1515.8" y1="813.7" y2="1446.7" stroke="#e6e6e6" stroke-width="2.200"/><line x1="1625.3" x2="1625.3" y1="813.7" y2="1446.7" stroke="#e6e6e6" stroke-width="2.200"/><line x1="1734.8" x2="1734.8" y1="813.7" y2="1446.7" stroke="#e6e6e6" stroke-width="2.200"/><line x1="1844.4" x2="1844.4" y1="813.7" y2="1446.7" stroke="#e6e6e6" stroke-width="2.200"/><line x1="1954.0" x2="1954.0" y1="813.7" y2="1446.7" stroke="#e6e6e6" stroke-width="2.200"/><line x1="2063.5" x2="2063.5" y1="813.7" y2="1446.7" stroke="#e6e6e6" stroke-width="2.200"/><line x1="1396" x2="2107" y1="1253.1" y2="1253.1" stroke="#e6e6e6" stroke-width="2.200"/><line x1="1396" x2="2107" y1="1043.9" y2="1043.9" stroke="#e6e6e6" stroke-width="2.200"/><line x1="1396" x2="2107" y1="834.7" y2="834.7" stroke="#e6e6e6" stroke-width="2.200"/><circle cx="1526.7" cy="1271.9" r="3.900" fill="#fd7b0c"/><circle cx="1581.5" cy="1263.6" r="3.900" fill="#fd7b0c"/><circle cx="1680.1" cy="1246.8" r="3.900" fill="#fd7b0c"/><circle cx="1658.2" cy="1322.1" r="3.900" fill="#fd7b0c"/><circle cx="1625.3" cy="1267.7" r="3.900" fill="#fd7b0c"/><circle cx="1526.7" cy="1276.1" r="3.900" fill="#fd7b0c"/><circle cx="1680.1" cy="1269.8" r="3.900" fill="#fd7b0c"/><circle cx="1658.2" cy="1376.5" r="3.900" fill="#fd7b0c"/><circle cx="1625.3" cy="1211.3" r="3.900" fill="#fd7b0c"/><circle cx="1581.5" cy="1299.1" r="3.900" fill="#fd7b0c"/><circle cx="1515.8" cy="1299.1" r="3.900" fill="#fd7b0c"/><circle cx="1537.7" cy="1230.1" r="3.900" fill="#fd7b0c"/><circle cx="1636.3" cy="1282.4" r="3.900" fill="#fd7b0c"/><circle cx="1712.9" cy="1366.1" r="3.900" fill="#fd7b0c"/><circle cx="1570.5" cy="1324.2" r="3.900" fill="#fd7b0c"/><circle cx="1680.1" cy="1280.3" r="3.900" fill="#fd7b0c"/><circle cx="1702.0" cy="1200.8" r="3.900" fill="#fd7b0c"/><circle cx="1559.6" cy="1370.3" r="3.900" fill="#fd7b0c"/><circle cx="1669.1" cy="1127.6" r="3.900" fill="#fd7b0c"/><circle cx="1450.0" cy="1299.1" r="3.900" fill="#fd7b0c"/><circle cx="1515.8" cy="1301.2" r="3.900" fill="#fd7b0c"/><circle cx="1614.3" cy="1338.9" r="3.900" fill="#fd7b0c"/><circle cx="1570.5" cy="1290.8" r="3.900" fill="#fd7b0c"/><circle cx="1515.8" cy="1278.2" r="3.900" fill="#fd7b0c"/><circle cx="1592.4" cy="1351.4" r="3.900" fill="#fd7b0c"/><circle cx="1548.6" cy="1240.5" r="3.900" fill="#fd7b0c"/><circle cx="1592.4" cy="1242.6" r="3.900" fill="#fd7b0c"/><circle cx="1428.1" cy="1297.0" r="3.900" fill="#fd7b0c"/><circle cx="1515.8" cy="1242.6" r="3.900" fill="#fd7b0c"/><circle cx="1493.8" cy="1263.6" r="3.900" fill="#fd7b0c"/><circle cx="1493.8" cy="1311.7" r="3.900" fill="#fd7b0c"/><circle cx="1603.4" cy="1263.6" r="3.900" fill="#fd7b0c"/><circle cx="1559.6" cy="1234.3" r="3.900" fill="#fd7b0c"/><circle cx="1680.1" cy="1328.4" r="3.900" fill="#fd7b0c"/><circle cx="1691.0" cy="1269.8" r="3.900" fill="#fd7b0c"/><circle cx="1625.3" cy="1278.2" r="3.900" fill="#fd7b0c"/><circle cx="1515.8" cy="1207.1" r="3.900" fill="#fd7b0c"/><circle cx="1526.7" cy="1303.3" r="3.900" fill="#fd7b0c"/><circle cx="1559.6" cy="1257.3" r="3.900" fill="#fd7b0c"/><circle cx="1537.7" cy="1326.3" r="3.900" fill="#fd7b0c"/><circle cx="1680.1" cy="1236.4" r="3.900" fill="#fd7b0c"/><circle cx="1581.5" cy="1336.8" r="3.900" fill="#fd7b0c"/><circle cx="1691.0" cy="1167.3" r="3.900" fill="#fd7b0c"/><circle cx="1570.5" cy="1315.9" r="3.900" fill="#fd7b0c"/><circle cx="1625.3" cy="1261.5" r="3.900" fill="#fd7b0c"/><circle cx="1537.7" cy="1230.1" r="3.900" fill="#fd7b0c"/><circle cx="1504.8" cy="1305.4" r="3.900" fill="#fd7b0c"/><circle cx="1625.3" cy="1336.8" r="3.900" fill="#fd7b0c"/><circle cx="1636.3" cy="1205.0" r="3.900" fill="#fd7b0c"/><circle cx="1581.5" cy="1261.5" r="3.900" fill="#fd7b0c"/><circle cx="1603.4" cy="1251.0" r="3.900" fill="#fd7b0c"/><circle cx="1625.3" cy="1357.7" r="3.900" fill="#fd7b0c"/><circle cx="1734.8" cy="1211.3" r="3.900" fill="#fd7b0c"/><circle cx="1592.4" cy="1368.2" r="3.900" fill="#fd7b0c"/><circle cx="1636.3" cy="1223.8" r="3.900" fill="#fd7b0c"/><circle cx="1581.5" cy="1274.0" r="3.900" fill="#fd7b0c"/><circle cx="1658.2" cy="1240.5" r="3.900" fill="#fd7b0c"/><circle cx="1526.7" cy="1326.3" r="3.900" fill="#fd7b0c"/><circle cx="1669.1" cy="1303.3" r="3.900" fill="#fd7b0c"/><circle cx="1570.5" cy="1343.1" r="3.900" fill="#fd7b0c"/><circle cx="1680.1" cy="1225.9" r="3.900" fill="#fd7b0c"/><circle cx="1570.5" cy="1303.3" r="3.900" fill="#fd7b0c"/><circle cx="1647.2" cy="1230.1" r="3.900" fill="#fd7b0c"/><circle cx="1559.6" cy="1328.4" r="3.900" fill="#fd7b0c"/><circle cx="1647.2" cy="1219.6" r="3.900" fill="#fd7b0c"/><circle cx="1680.1" cy="1347.2" r="3.900" fill="#fd7b0c"/><circle cx="1603.4" cy="1230.1" r="3.900" fill="#fd7b0c"/><circle cx="1625.3" cy="1338.9" r="3.900" fill="#fd7b0c"/><circle cx="1712.9" cy="1215.4" r="3.900" fill="#fd7b0c"/><circle cx="1625.3" cy="1389.1" r="3.900" fill="#fd7b0c"/><circle cx="1625.3" cy="1259.4" r="3.900" fill="#fd7b0c"/><circle cx="1691.0" cy="1261.5" r="3.900" fill="#fd7b0c"/><circle cx="1702.0" cy="1131.8" r="3.900" fill="#fd7b0c"/><circle cx="1625.3" cy="1347.2" r="3.900" fill="#fd7b0c"/><circle cx="1680.1" cy="1194.5" r="3.900" fill="#fd7b0c"/><circle cx="1636.3" cy="1234.3" r="3.900" fill="#fd7b0c"/><circle cx="1559.6" cy="1311.7" r="3.900" fill="#fd7b0c"/><circle cx="1592.4" cy="1332.6" r="3.900" fill="#fd7b0c"/><circle cx="1680.1" cy="1209.2" r="3.900" fill="#fd7b0c"/><circle cx="1614.3" cy="1366.1" r="3.900" fill="#fd7b0c"/><circle cx="1691.0" cy="1192.4" r="3.900" fill="#fd7b0c"/><circle cx="1592.4" cy="1322.1" r="3.900" fill="#fd7b0c"/><circle cx="1658.2" cy="1355.6" r="3.900" fill="#fd7b0c"/><circle cx="1636.3" cy="1309.6" r="3.900" fill="#fd7b0c"/><circle cx="1669.1" cy="1225.9" r="3.900" fill="#fd7b0c"/><circle cx="1625.3" cy="1330.5" r="3.900" fill="#fd7b0c"/><circle cx="1614.3" cy="1318.0" r="3.900" fill="#fd7b0c"/><circle cx="1614.3" cy="1288.7" r="3.900" fill="#fd7b0c"/><circle cx="1625.3" cy="1276.1" r="3.900" fill="#fd7b0c"/><circle cx="1756.8" cy="1343.1" r="3.900" fill="#fd7b0c"/><circle cx="1789.6" cy="1230.1" r="3.900" fill="#fd7b0c"/><circle cx="1570.5" cy="1378.6" r="3.900" fill="#fd7b0c"/><circle cx="1581.5" cy="1261.5" r="3.900" fill="#fd7b0c"/><circle cx="1592.4" cy="1332.6" r="3.900" fill="#fd7b0c"/><circle cx="1822.5" cy="1236.4" r="3.900" fill="#fd7b0c"/><circle cx="1625.3" cy="1292.8" r="3.900" fill="#fd7b0c"/><circle cx="1691.0" cy="1246.8" r="3.900" fill="#fd7b0c"/><circle cx="1493.8" cy="1397.4" r="3.900" fill="#fd7b0c"/><circle cx="1647.2" cy="1186.2" r="3.900" fill="#fd7b0c"/><circle cx="1647.2" cy="1357.7" r="3.900" fill="#fd7b0c"/><circle cx="1767.7" cy="1232.2" r="3.900" fill="#fd7b0c"/><circle cx="1548.6" cy="1301.2" r="3.900" fill="#fd7b0c"/><circle cx="1625.3" cy="1299.1" r="3.900" fill="#fd7b0c"/><circle cx="1658.2" cy="1297.0" r="3.900" fill="#fd7b0c"/><circle cx="1559.6" cy="1259.4" r="3.900" fill="#fd7b0c"/><circle cx="1723.9" cy="1282.4" r="3.900" fill="#fd7b0c"/><circle cx="1625.3" cy="1290.8" r="3.900" fill="#fd7b0c"/><circle cx="1526.7" cy="1292.8" r="3.900" fill="#fd7b0c"/><circle cx="1702.0" cy="1186.2" r="3.900" fill="#fd7b0c"/><circle cx="1712.9" cy="1292.8" r="3.900" fill="#fd7b0c"/><circle cx="1636.3" cy="1135.9" r="3.900" fill="#fd7b0c"/><circle cx="1658.2" cy="1259.4" r="3.900" fill="#fd7b0c"/><circle cx="1702.0" cy="1207.1" r="3.900" fill="#fd7b0c"/><circle cx="1636.3" cy="1261.5" r="3.900" fill="#fd7b0c"/><circle cx="1691.0" cy="1196.6" r="3.900" fill="#fd7b0c"/><circle cx="1603.4" cy="1282.4" r="3.900" fill="#fd7b0c"/><circle cx="1723.9" cy="1309.6" r="3.900" fill="#fd7b0c"/><circle cx="1614.3" cy="1343.1" r="3.900" fill="#fd7b0c"/><circle cx="1614.3" cy="1230.1" r="3.900" fill="#fd7b0c"/><circle cx="1592.4" cy="1332.6" r="3.900" fill="#fd7b0c"/><circle cx="1712.9" cy="1301.2" r="3.900" fill="#fd7b0c"/><circle cx="1471.9" cy="1248.9" r="3.900" fill="#fd7b0c"/><circle cx="1756.8" cy="1223.8" r="3.900" fill="#fd7b0c"/><circle cx="1581.5" cy="1353.5" r="3.900" fill="#fd7b0c"/><circle cx="1723.9" cy="1240.5" r="3.900" fill="#fd7b0c"/><circle cx="1636.3" cy="1278.2" r="3.900" fill="#fd7b0c"/><circle cx="1680.1" cy="1221.7" r="3.900" fill="#fd7b0c"/><circle cx="1636.3" cy="1274.0" r="3.900" fill="#fd7b0c"/><circle cx="1844.4" cy="1167.3" r="3.900" fill="#fd7b0c"/><circle cx="1625.3" cy="1284.5" r="3.900" fill="#fd7b0c"/><circle cx="1702.0" cy="1188.2" r="3.900" fill="#fd7b0c"/><circle cx="1658.2" cy="1320.0" r="3.900" fill="#fd7b0c"/><circle cx="1723.9" cy="1305.4" r="3.900" fill="#fd7b0c"/><circle cx="1592.4" cy="1292.8" r="3.900" fill="#fd7b0c"/><circle cx="1625.3" cy="1230.1" r="3.900" fill="#fd7b0c"/><circle cx="1636.3" cy="1345.1" r="3.900" fill="#fd7b0c"/><circle cx="1734.8" cy="1248.9" r="3.900" fill="#fd7b0c"/><circle cx="1570.5" cy="1315.9" r="3.900" fill="#fd7b0c"/><circle cx="1658.2" cy="1259.4" r="3.900" fill="#fd7b0c"/><circle cx="1658.2" cy="1248.9" r="3.900" fill="#fd7b0c"/><circle cx="1592.4" cy="1240.5" r="3.900" fill="#fd7b0c"/><circle cx="1603.4" cy="1418.4" r="3.900" fill="#fd7b0c"/><circle cx="1625.3" cy="1238.5" r="3.900" fill="#fd7b0c"/><circle cx="1647.2" cy="1309.6" r="3.900" fill="#fd7b0c"/><circle cx="1570.5" cy="1274.0" r="3.900" fill="#fd7b0c"/><circle cx="1625.3" cy="1269.8" r="3.900" fill="#fd7b0c"/><circle cx="1559.6" cy="1324.2" r="3.900" fill="#fd7b0c"/><circle cx="1680.1" cy="1336.8" r="3.900" fill="#fd7b0c"/><circle cx="1658.2" cy="1299.1" r="3.900" fill="#fd7b0c"/><circle cx="1592.4" cy="1336.8" r="3.900" fill="#fd7b0c"/><circle cx="1745.8" cy="1221.7" r="3.900" fill="#fd7b0c"/><rect x="1851.5" y="1121.7" width="7.800" height="7.600" fill="#127a79"/><rect x="2059.6" y="1040.1" width="7.800" height="7.600" fill="#127a79"/><rect x="1840.5" y="1067.3" width="7.800" height="7.600" fill="#127a79"/><rect x="1928.1" y="1040.1" width="7.800" height="7.600" fill="#127a79"/><rect x="1895.3" y="1090.3" width="7.800" height="7.600" fill="#127a79"/><rect x="1840.5" y="1113.3" width="7.800" height="7.600" fill="#127a79"/><rect x="1851.5" y="1136.3" width="7.800" height="7.600" fill="#127a79"/><rect x="1939.1" y="1109.1" width="7.800" height="7.600" fill="#127a79"/><rect x="1829.5" y="1180.3" width="7.800" height="7.600" fill="#127a79"/><rect x="1895.3" y="1107.0" width="7.800" height="7.600" fill="#127a79"/><rect x="1884.3" y="1230.5" width="7.800" height="7.600" fill="#127a79"/><rect x="1906.2" y="1061.0" width="7.800" height="7.600" fill="#127a79"/><rect x="1884.3" y="1134.2" width="7.800" height="7.600" fill="#127a79"/><rect x="1873.4" y="1073.6" width="7.800" height="7.600" fill="#127a79"/><rect x="1840.5" y="1128.0" width="7.800" height="7.600" fill="#127a79"/><rect x="1917.2" y="1054.7" width="7.800" height="7.600" fill="#127a79"/><rect x="1840.5" y="1207.5" width="7.800" height="7.600" fill="#127a79"/><rect x="1961.0" y="1056.8" width="7.800" height="7.600" fill="#127a79"/><rect x="1829.5" y="1119.6" width="7.800" height="7.600" fill="#127a79"/><rect x="1972.0" y="1067.3" width="7.800" height="7.600" fill="#127a79"/><rect x="1928.1" y="1035.9" width="7.800" height="7.600" fill="#127a79"/><rect x="1895.3" y="1142.6" width="7.800" height="7.600" fill="#127a79"/><rect x="1873.4" y="1113.3" width="7.800" height="7.600" fill="#127a79"/><rect x="1895.3" y="1117.5" width="7.800" height="7.600" fill="#127a79"/><rect x="1895.3" y="1188.6" width="7.800" height="7.600" fill="#127a79"/><rect x="1895.3" y="1121.7" width="7.800" height="7.600" fill="#127a79"/><rect x="1906.2" y="1155.2" width="7.800" height="7.600" fill="#127a79"/><rect x="1895.3" y="1086.1" width="7.800" height="7.600" fill="#127a79"/><rect x="1840.5" y="1077.8" width="7.800" height="7.600" fill="#127a79"/><rect x="1950.0" y="1040.1" width="7.800" height="7.600" fill="#127a79"/><rect x="1972.0" y="1096.6" width="7.800" height="7.600" fill="#127a79"/><rect x="1829.5" y="1190.7" width="7.800" height="7.600" fill="#127a79"/><rect x="1807.6" y="1142.6" width="7.800" height="7.600" fill="#127a79"/><rect x="2059.6" y="839.3" width="7.800" height="7.600" fill="#127a79"/><rect x="1950.0" y="1058.9" width="7.800" height="7.600" fill="#127a79"/><rect x="1950.0" y="1073.6" width="7.800" height="7.600" fill="#127a79"/><rect x="1873.4" y="1194.9" width="7.800" height="7.600" fill="#127a79"/><rect x="1939.1" y="1157.3" width="7.800" height="7.600" fill="#127a79"/><rect x="1818.6" y="1165.6" width="7.800" height="7.600" fill="#127a79"/><rect x="1818.6" y="1067.3" width="7.800" height="7.600" fill="#127a79"/><rect x="1818.6" y="1192.8" width="7.800" height="7.600" fill="#127a79"/><rect x="2004.8" y="1048.5" width="7.800" height="7.600" fill="#127a79"/><rect x="1840.5" y="1138.4" width="7.800" height="7.600" fill="#127a79"/><rect x="1906.2" y="1048.5" width="7.800" height="7.600" fill="#127a79"/><rect x="1972.0" y="1029.6" width="7.800" height="7.600" fill="#127a79"/><rect x="1917.2" y="1174.0" width="7.800" height="7.600" fill="#127a79"/><rect x="1840.5" y="1134.2" width="7.800" height="7.600" fill="#127a79"/><rect x="2004.8" y="1029.6" width="7.800" height="7.600" fill="#127a79"/><rect x="1873.4" y="1146.8" width="7.800" height="7.600" fill="#127a79"/><rect x="1895.3" y="1140.5" width="7.800" height="7.600" fill="#127a79"/><rect x="1840.5" y="1111.2" width="7.800" height="7.600" fill="#127a79"/><rect x="1950.0" y="1071.5" width="7.800" height="7.600" fill="#127a79"/><rect x="1840.5" y="1142.6" width="7.800" height="7.600" fill="#127a79"/><rect x="2004.8" y="1038.0" width="7.800" height="7.600" fill="#127a79"/><rect x="1917.2" y="1113.3" width="7.800" height="7.600" fill="#127a79"/><rect x="1950.0" y="1144.7" width="7.800" height="7.600" fill="#127a79"/><rect x="1818.6" y="1169.8" width="7.800" height="7.600" fill="#127a79"/><rect x="1950.0" y="1134.2" width="7.800" height="7.600" fill="#127a79"/><rect x="1818.6" y="1182.4" width="7.800" height="7.600" fill="#127a79"/><rect x="1993.9" y="1031.7" width="7.800" height="7.600" fill="#127a79"/><rect x="1818.6" y="1138.4" width="7.800" height="7.600" fill="#127a79"/><rect x="1961.0" y="1119.6" width="7.800" height="7.600" fill="#127a79"/><rect x="1884.3" y="1130.1" width="7.800" height="7.600" fill="#127a79"/><rect x="2070.6" y="950.1" width="7.800" height="7.600" fill="#127a79"/><rect x="1939.1" y="1128.0" width="7.800" height="7.600" fill="#127a79"/><rect x="2059.6" y="1044.3" width="7.800" height="7.600" fill="#127a79"/><rect x="1884.3" y="1119.6" width="7.800" height="7.600" fill="#127a79"/><rect x="2048.6" y="1050.6" width="7.800" height="7.600" fill="#127a79"/><rect x="1950.0" y="1176.1" width="7.800" height="7.600" fill="#127a79"/><rect x="1982.9" y="1025.5" width="7.800" height="7.600" fill="#127a79"/><rect x="1906.2" y="1088.2" width="7.800" height="7.600" fill="#127a79"/><rect x="1961.0" y="1115.4" width="7.800" height="7.600" fill="#127a79"/><rect x="1961.0" y="1077.8" width="7.800" height="7.600" fill="#127a79"/><rect x="1917.2" y="1113.3" width="7.800" height="7.600" fill="#127a79"/><rect x="1906.2" y="1115.4" width="7.800" height="7.600" fill="#127a79"/><rect x="2059.6" y="1069.4" width="7.800" height="7.600" fill="#127a79"/><rect x="1829.5" y="1092.4" width="7.800" height="7.600" fill="#127a79"/><rect x="1950.0" y="1017.1" width="7.800" height="7.600" fill="#127a79"/><rect x="1895.3" y="1140.5" width="7.800" height="7.600" fill="#127a79"/><rect x="1982.9" y="1140.5" width="7.800" height="7.600" fill="#127a79"/><rect x="1862.4" y="1058.9" width="7.800" height="7.600" fill="#127a79"/><rect x="1961.0" y="987.8" width="7.800" height="7.600" fill="#127a79"/><rect x="1862.4" y="1094.5" width="7.800" height="7.600" fill="#127a79"/><rect x="1993.9" y="1040.1" width="7.800" height="7.600" fill="#127a79"/><rect x="1862.4" y="1146.8" width="7.800" height="7.600" fill="#127a79"/><rect x="2037.7" y="1023.4" width="7.800" height="7.600" fill="#127a79"/><rect x="1928.1" y="1178.2" width="7.800" height="7.600" fill="#127a79"/><rect x="1928.1" y="1012.9" width="7.800" height="7.600" fill="#127a79"/><rect x="1862.4" y="1092.4" width="7.800" height="7.600" fill="#127a79"/><rect x="2059.6" y="996.2" width="7.800" height="7.600" fill="#127a79"/><rect x="1928.1" y="1092.4" width="7.800" height="7.600" fill="#127a79"/><rect x="2037.7" y="994.1" width="7.800" height="7.600" fill="#127a79"/><rect x="1862.4" y="1134.2" width="7.800" height="7.600" fill="#127a79"/><rect x="1993.9" y="1050.6" width="7.800" height="7.600" fill="#127a79"/><rect x="1884.3" y="1155.2" width="7.800" height="7.600" fill="#127a79"/><rect x="2015.8" y="1023.4" width="7.800" height="7.600" fill="#127a79"/><rect x="1906.2" y="1052.7" width="7.800" height="7.600" fill="#127a79"/><rect x="1972.0" y="1105.0" width="7.800" height="7.600" fill="#127a79"/><rect x="1763.8" y="1073.6" width="7.800" height="7.600" fill="#127a79"/><rect x="2004.8" y="1017.1" width="7.800" height="7.600" fill="#127a79"/><rect x="1939.1" y="1071.5" width="7.800" height="7.600" fill="#127a79"/><rect x="2037.7" y="916.7" width="7.800" height="7.600" fill="#127a79"/><rect x="1895.3" y="1098.7" width="7.800" height="7.600" fill="#127a79"/><rect x="2037.7" y="1058.9" width="7.800" height="7.600" fill="#127a79"/><rect x="1906.2" y="1096.6" width="7.800" height="7.600" fill="#127a79"/><rect x="1895.3" y="1107.0" width="7.800" height="7.600" fill="#127a79"/><rect x="1840.5" y="1213.7" width="7.800" height="7.600" fill="#127a79"/><rect x="1939.1" y="969.0" width="7.800" height="7.600" fill="#127a79"/><rect x="1818.6" y="1180.3" width="7.800" height="7.600" fill="#127a79"/><rect x="1829.5" y="1079.8" width="7.800" height="7.600" fill="#127a79"/><rect x="1906.2" y="1029.6" width="7.800" height="7.600" fill="#127a79"/><rect x="2048.6" y="1044.3" width="7.800" height="7.600" fill="#127a79"/><rect x="1873.4" y="1176.1" width="7.800" height="7.600" fill="#127a79"/><rect x="2059.6" y="1008.7" width="7.800" height="7.600" fill="#127a79"/><rect x="1917.2" y="1119.6" width="7.800" height="7.600" fill="#127a79"/><rect x="2059.6" y="933.4" width="7.800" height="7.600" fill="#127a79"/><rect x="1917.2" y="1155.2" width="7.800" height="7.600" fill="#127a79"/><rect x="1972.0" y="1065.2" width="7.800" height="7.600" fill="#127a79"/><rect x="1884.3" y="1098.7" width="7.800" height="7.600" fill="#127a79"/><rect x="1895.3" y="1107.0" width="7.800" height="7.600" fill="#127a79"/><rect x="1972.0" y="1031.7" width="7.800" height="7.600" fill="#127a79"/><rect x="1862.4" y="1140.5" width="7.800" height="7.600" fill="#127a79"/><rect x="1873.4" y="1042.2" width="7.800" height="7.600" fill="#127a79"/><path d="M1647.2 1111.2l5.200 8.900h-10.400z" fill="#8c00ee"/><path d="M1691.0 1038.0l5.200 8.900h-10.400z" fill="#8c00ee"/><path d="M1658.2 1010.8l5.200 8.900h-10.400z" fill="#8c00ee"/><path d="M1603.4 1134.2l5.200 8.900h-10.400z" fill="#8c00ee"/><path d="M1702.0 981.5l5.200 8.900h-10.400z" fill="#8c00ee"/><path d="M1712.9 1138.4l5.200 8.900h-10.400z" fill="#8c00ee"/><path d="M1493.8 1119.6l5.200 8.900h-10.400z" fill="#8c00ee"/><path d="M1702.0 1010.8l5.200 8.900h-10.400z" fill="#8c00ee"/><path d="M1680.1 1121.7l5.200 8.900h-10.400z" fill="#8c00ee"/><path d="M1712.9 1010.8l5.200 8.900h-10.400z" fill="#8c00ee"/><path d="M1658.2 1109.1l5.200 8.900h-10.400z" fill="#8c00ee"/><path d="M1669.1 1002.4l5.200 8.900h-10.400z" fill="#8c00ee"/><path d="M1570.5 1100.8l5.200 8.900h-10.400z" fill="#8c00ee"/><path d="M1745.8 996.2l5.200 8.900h-10.400z" fill="#8c00ee"/><path d="M1625.3 1123.8l5.200 8.900h-10.400z" fill="#8c00ee"/><path d="M1745.8 1027.5l5.200 8.900h-10.400z" fill="#8c00ee"/><path d="M1702.0 1031.7l5.200 8.900h-10.400z" fill="#8c00ee"/><path d="M1526.7 870.6l5.200 8.900h-10.400z" fill="#8c00ee"/><path d="M1625.3 1113.3l5.200 8.900h-10.400z" fill="#8c00ee"/><path d="M1680.1 1054.7l5.200 8.900h-10.400z" fill="#8c00ee"/><path d="M1526.7 1197.0l5.200 8.900h-10.400z" fill="#8c00ee"/><path d="M1636.3 1069.4l5.200 8.900h-10.400z" fill="#8c00ee"/><path d="M1592.4 1180.3l5.200 8.900h-10.400z" fill="#8c00ee"/><path d="M1658.2 1025.4l5.200 8.900h-10.400z" fill="#8c00ee"/><path d="M1680.1 1107.0l5.200 8.900h-10.400z" fill="#8c00ee"/><path d="M1702.0 996.2l5.200 8.900h-10.400z" fill="#8c00ee"/><path d="M1734.8 1027.5l5.200 8.900h-10.400z" fill="#8c00ee"/><path d="M1734.8 1048.5l5.200 8.900h-10.400z" fill="#8c00ee"/><path d="M1636.3 1113.3l5.200 8.900h-10.400z" fill="#8c00ee"/><path d="M1789.6 979.4l5.200 8.900h-10.400z" fill="#8c00ee"/><path d="M1592.4 1228.4l5.200 8.900h-10.400z" fill="#8c00ee"/><path d="M1745.8 950.1l5.200 8.900h-10.400z" fill="#8c00ee"/><path d="M1592.4 1194.9l5.200 8.900h-10.400z" fill="#8c00ee"/><path d="M1767.7 1017.1l5.200 8.900h-10.400z" fill="#8c00ee"/><path d="M1680.1 1044.3l5.200 8.900h-10.400z" fill="#8c00ee"/><path d="M1723.9 1090.3l5.200 8.900h-10.400z" fill="#8c00ee"/><path d="M1680.1 1088.2l5.200 8.900h-10.400z" fill="#8c00ee"/><path d="M1844.4 996.2l5.200 8.900h-10.400z" fill="#8c00ee"/><path d="M1647.2 1102.9l5.200 8.900h-10.400z" fill="#8c00ee"/><path d="M1789.6 964.8l5.200 8.900h-10.400z" fill="#8c00ee"/><path d="M1844.4 1058.9l5.200 8.900h-10.400z" fill="#8c00ee"/><path d="M1592.4 1117.5l5.200 8.900h-10.400z" fill="#8c00ee"/><path d="M1691.0 1019.2l5.200 8.900h-10.400z" fill="#8c00ee"/><path d="M1691.0 1132.1l5.200 8.900h-10.400z" fill="#8c00ee"/><path d="M1691.0 1019.2l5.200 8.900h-10.400z" fill="#8c00ee"/><path d="M1745.8 1021.3l5.200 8.900h-10.400z" fill="#8c00ee"/><path d="M1625.3 1035.9l5.200 8.900h-10.400z" fill="#8c00ee"/><path d="M1866.3 1058.9l5.200 8.900h-10.400z" fill="#8c00ee"/><path d="M1592.4 1006.6l5.200 8.900h-10.400z" fill="#8c00ee"/><path d="M1712.9 1042.2l5.200 8.900h-10.400z" fill="#8c00ee"/><path d="M1723.9 1077.7l5.200 8.900h-10.400z" fill="#8c00ee"/><path d="M1745.8 1008.7l5.200 8.900h-10.400z" fill="#8c00ee"/><path d="M1658.2 1128.0l5.200 8.900h-10.400z" fill="#8c00ee"/><path d="M1767.7 1023.4l5.200 8.900h-10.400z" fill="#8c00ee"/><path d="M1592.4 1194.9l5.200 8.900h-10.400z" fill="#8c00ee"/><path d="M1702.0 992.0l5.200 8.900h-10.400z" fill="#8c00ee"/><path d="M1636.3 1138.4l5.200 8.900h-10.400z" fill="#8c00ee"/><path d="M1767.7 1052.6l5.200 8.900h-10.400z" fill="#8c00ee"/><path d="M1756.8 1033.8l5.200 8.900h-10.400z" fill="#8c00ee"/><path d="M1669.1 1130.0l5.200 8.900h-10.400z" fill="#8c00ee"/><path d="M1800.6 998.3l5.200 8.900h-10.400z" fill="#8c00ee"/><path d="M1614.3 1104.9l5.200 8.900h-10.400z" fill="#8c00ee"/><path d="M1680.1 1128.0l5.200 8.900h-10.400z" fill="#8c00ee"/><path d="M1811.5 916.7l5.200 8.900h-10.400z" fill="#8c00ee"/><path d="M1756.8 1174.0l5.200 8.900h-10.400z" fill="#8c00ee"/><path d="M1658.2 1046.4l5.200 8.900h-10.400z" fill="#8c00ee"/><path d="M1844.4 1021.3l5.200 8.900h-10.400z" fill="#8c00ee"/><path d="M1712.9 1033.8l5.200 8.900h-10.400z" fill="#8c00ee"/><text x="1386" y="1259.1" text-anchor="end" font-family="Liberation Sans, Arial, sans-serif" font-size="17" fill="#4d4d4d">40</text><text x="1386" y="1049.9" text-anchor="end" font-family="Liberation Sans, Arial, sans-serif" font-size="17" fill="#4d4d4d">50</text><text x="1386" y="840.7" text-anchor="end" font-family="Liberation Sans, Arial, sans-serif" font-size="17" fill="#4d4d4d">60</text><text x="1406.2" y="1469" text-anchor="middle" font-family="Liberation Sans, Arial, sans-serif" font-size="17" fill="#4d4d4d">170</text><text x="1515.8" y="1469" text-anchor="middle" font-family="Liberation Sans, Arial, sans-serif" font-size="17" fill="#4d4d4d">180</text><text x="1625.3" y="1469" text-anchor="middle" font-family="Liberation Sans, Arial, sans-serif" font-size="17" fill="#4d4d4d">190</text><text x="1734.8" y="1469" text-anchor="middle" font-family="Liberation Sans, Arial, sans-serif" font-size="17" fill="#4d4d4d">200</text><text x="1844.4" y="1469" text-anchor="middle" font-family="Liberation Sans, Arial, sans-serif" font-size="17" fill="#4d4d4d">210</text><text x="1954.0" y="1469" text-anchor="middle" font-family="Liberation Sans, Arial, sans-serif" font-size="17" fill="#4d4d4d">220</text><text x="2063.5" y="1469" text-anchor="middle" font-family="Liberation Sans, Arial, sans-serif" font-size="17" fill="#4d4d4d">230</text><text x="1751.400" y="1494.300" text-anchor="middle" font-family="Liberation Sans, Arial, sans-serif" font-size="21.330" fill="#000">Flipper length (mm)</text><text transform="translate(1356.500 1132) rotate(-90)" text-anchor="middle" font-family="Liberation Sans, Arial, sans-serif" font-size="21.330" fill="#000">Bill length (mm)</text><text x="2140" y="1082.700" font-family="Liberation Sans, Arial, sans-serif" font-size="21.330" fill="#000">Penguin species</text><circle cx="2156.100" cy="1111.900" r="4" fill="#fd7b0c"/><path d="M2156.100 1140.100l5.200 8.900h-10.400z" fill="#8c00ee"/><rect x="2152.200" y="1176.100" width="8" height="7.600" fill="#127a79"/><text x="2184.100" y="1118.4" font-family="Liberation Sans, Arial, sans-serif" font-size="17" fill="#000">Adelie</text><text x="2184.100" y="1152.1" font-family="Liberation Sans, Arial, sans-serif" font-size="17" fill="#000">Chinstrap</text><text x="2184.100" y="1185.7" font-family="Liberation Sans, Arial, sans-serif" font-size="17" fill="#000">Gentoo</text><g transform="translate(2271.160 827.760) scale(1.930)" fill="#0a4afc"><path d="M4.715 6.542 3.343 7.914a3 3 0 1 0 4.243 4.243l1.828-1.829A3 3 0 0 0 8.586 5.500L8 6.086a1 1 0 0 0-.154.199 2 2 0 0 1 .861 3.337L6.880 11.450a2 2 0 1 1-2.830-2.830l.793-.792a4 4 0 0 1-.128-1.287z"/><path d="M6.586 4.672A3 3 0 0 0 7.414 9.500l.775-.776a2 2 0 0 1-.896-3.346L9.120 3.550a2 2 0 1 1 2.830 2.830l-.793.792c.112.420.155.855.128 1.287l1.372-1.372a3 3 0 1 0-4.243-4.243z"/></g></svg>
</div>
</body></html>
